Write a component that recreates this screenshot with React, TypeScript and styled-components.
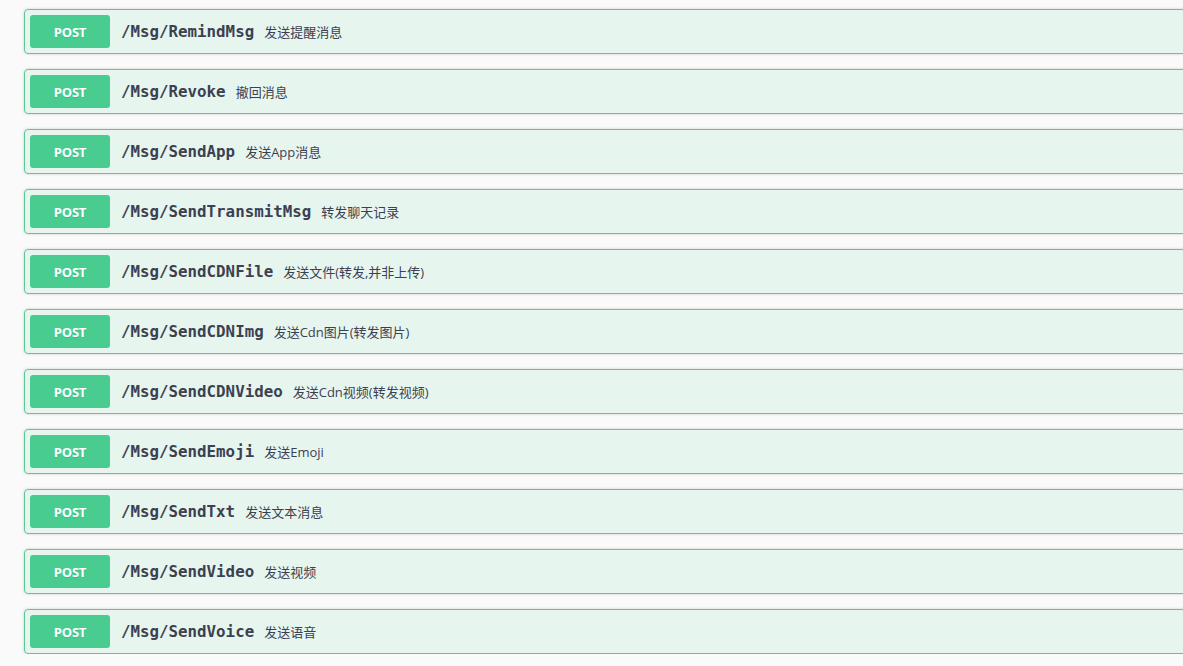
import React from 'react';
import { styled, createGlobalStyle } from 'styled-components';

const GlobalStyle = createGlobalStyle`
  html, body {
    margin: 0;
    padding: 0;
    background: #fafafa;
    overflow: hidden;
  }
`;

const operations = [
  { path: '/Msg/RemindMsg', summary: '发送提醒消息' },
  { path: '/Msg/Revoke', summary: '撤回消息' },
  { path: '/Msg/SendApp', summary: '发送App消息' },
  { path: '/Msg/SendTransmitMsg', summary: '转发聊天记录' },
  { path: '/Msg/SendCDNFile', summary: '发送文件(转发,并非上传)' },
  { path: '/Msg/SendCDNImg', summary: '发送Cdn图片(转发图片)' },
  { path: '/Msg/SendCDNVideo', summary: '发送Cdn视频(转发视频)' },
  { path: '/Msg/SendEmoji', summary: '发送Emoji' },
  { path: '/Msg/SendTxt', summary: '发送文本消息' },
  { path: '/Msg/SendVideo', summary: '发送视频' },
  { path: '/Msg/SendVoice', summary: '发送语音' },
];

const App = () => {
  return (
    <>
      <GlobalStyle />
      <OperationList>
        {operations.map((op) => (
          <OpBlock key={op.path}>
            <OpSummary>
              <MethodBadge>POST</MethodBadge>
              <OpPath>{op.path}</OpPath>
              <OpDescription>{op.summary}</OpDescription>
            </OpSummary>
          </OpBlock>
        ))}
      </OperationList>
    </>
  );
};

export default App;

const OperationList = styled.div`
  width: 1200px;
  padding: 9px 0 0 24px;
  display: flex;
  flex-direction: column;
  gap: 15px;
`;

const OpBlock = styled.div`
  border: 1px solid #5fc796;
  border-radius: 4px;
  background: rgba(73, 204, 144, 0.1);
  box-shadow: 0 0 3px rgba(0, 0, 0, 0.19);
`;

const OpSummary = styled.div`
  display: flex;
  align-items: center;
  padding: 5px;
`;

const MethodBadge = styled.span`
  min-width: 80px;
  height: 33px;
  box-sizing: border-box;
  display: flex;
  align-items: center;
  justify-content: center;
  border-radius: 3px;
  background: #49cc90;
  color: #fff;
  font-family: 'Open Sans', 'Liberation Sans', sans-serif;
  font-size: 13px;
  font-weight: 700;
  letter-spacing: -0.2px;
  text-shadow: 0 1px 0 rgba(0, 0, 0, 0.1);
`;

const OpPath = styled.span`
  padding: 0 10px 0 11px;
  color: #3b4151;
  font-family: 'DejaVu Sans Mono', 'Liberation Mono', monospace;
  font-size: 15.8px;
  font-weight: 700;
`;

const OpDescription = styled.span`
  color: #3b4151;
  font-family: 'Open Sans', 'Noto Sans CJK SC', sans-serif;
  font-size: 13px;
`;
